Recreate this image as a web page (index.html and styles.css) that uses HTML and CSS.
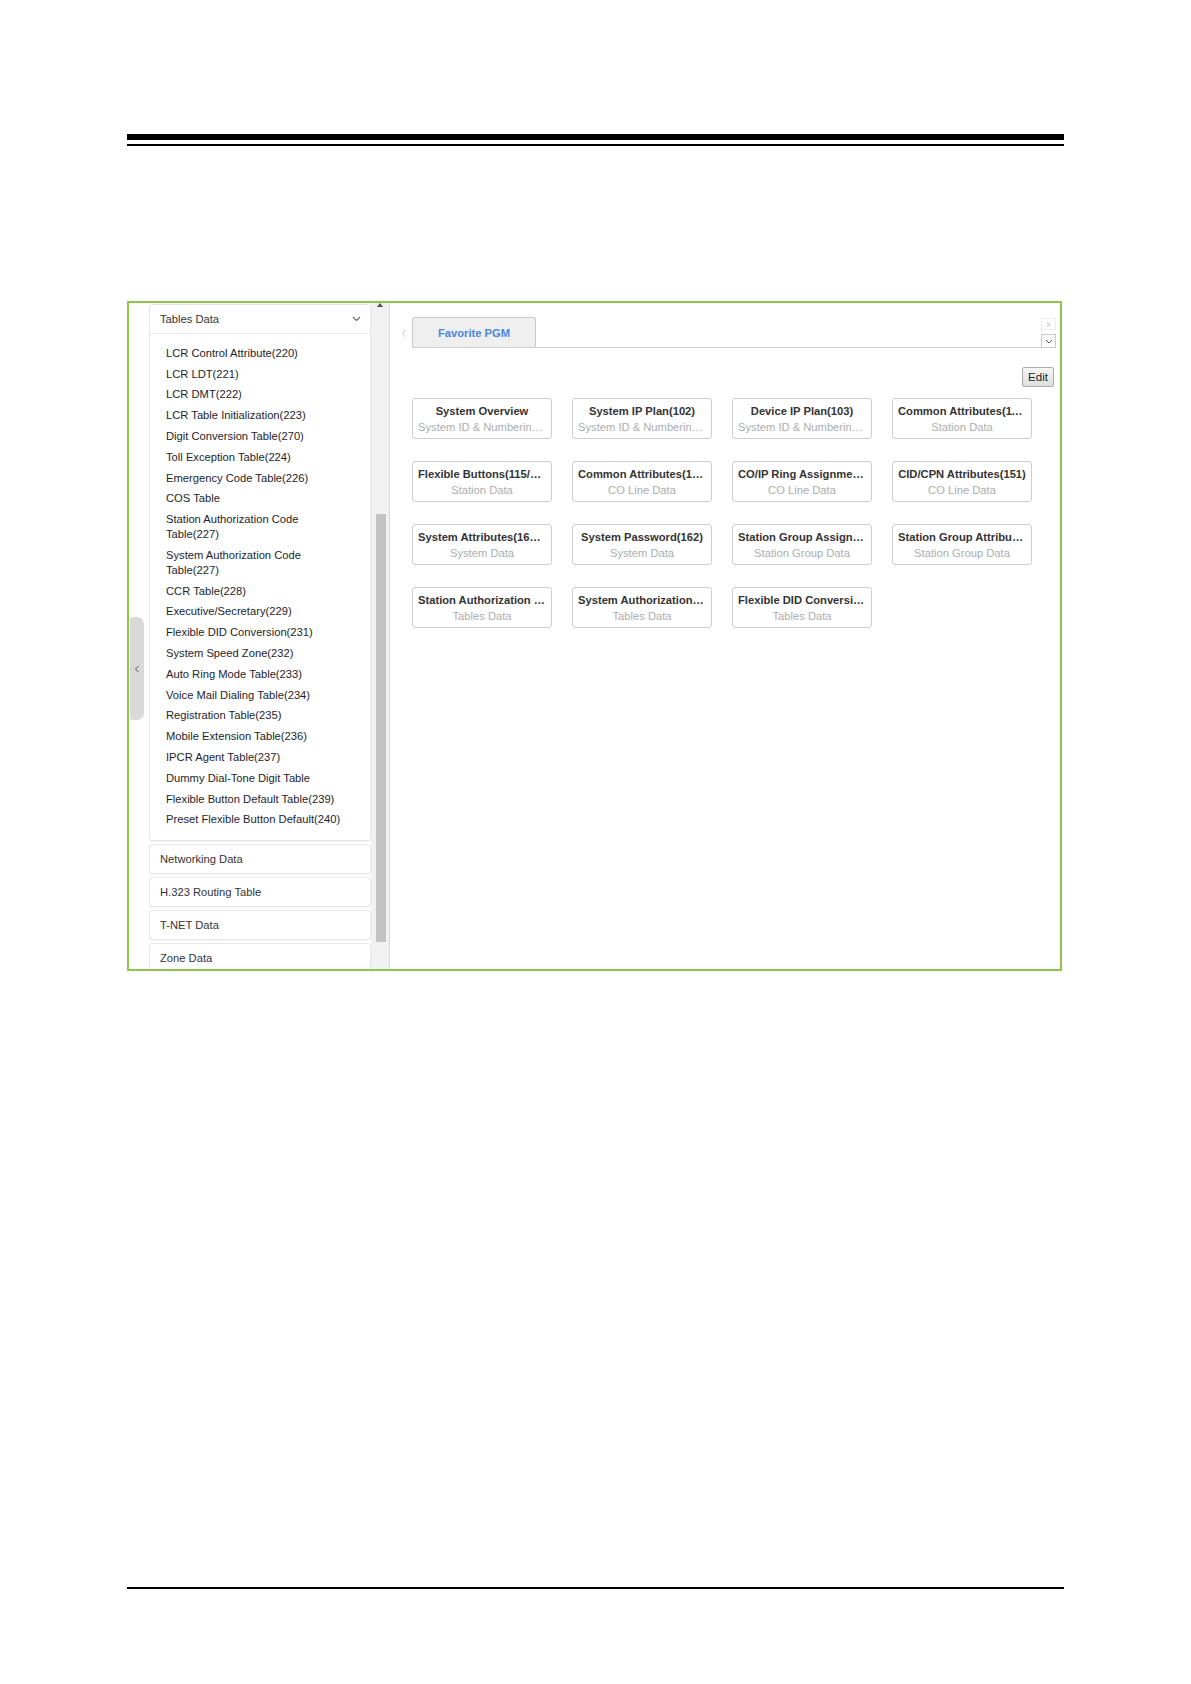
FILE: index.html
```html
<!DOCTYPE html>
<html lang="en">
  <head>
    <meta charset="UTF-8" />
    <meta name="viewport" content="width=device-width, initial-scale=1.0" />
    <title>Favorite PGM</title>
    <link rel="stylesheet" href="styles.css">
  </head>
  <body>
    <div class="page">
      <div class="rule">
        <div class="rule-thick"></div>
        <div class="rule-thin"></div>
      </div>

      <div class="frame">
        <div class="sidebar">
          <div class="gutter">
            <div class="collapse">
              <svg width="6" height="8" viewBox="0 0 6 8"><path d="M4.5 1 L1.5 4 L4.5 7" fill="none" stroke="#555" stroke-width="1"/></svg>
            </div>
          </div>

          <div class="panels">
            <div class="panel open">
              <div class="panel-head">
                <span>Tables Data</span>
                <svg width="9" height="6" viewBox="0 0 9 6"><path d="M1 1 L4.5 4.5 L8 1" fill="none" stroke="#666" stroke-width="1.1"/></svg>
              </div>
              <ul class="menu">
                <li>LCR Control Attribute(220)</li>
                <li>LCR LDT(221)</li>
                <li>LCR DMT(222)</li>
                <li>LCR Table Initialization(223)</li>
                <li>Digit Conversion Table(270)</li>
                <li>Toll Exception Table(224)</li>
                <li>Emergency Code Table(226)</li>
                <li>COS Table</li>
                <li>Station Authorization Code<br>Table(227)</li>
                <li>System Authorization Code<br>Table(227)</li>
                <li>CCR Table(228)</li>
                <li>Executive/Secretary(229)</li>
                <li>Flexible DID Conversion(231)</li>
                <li>System Speed Zone(232)</li>
                <li>Auto Ring Mode Table(233)</li>
                <li>Voice Mail Dialing Table(234)</li>
                <li>Registration Table(235)</li>
                <li>Mobile Extension Table(236)</li>
                <li>IPCR Agent Table(237)</li>
                <li>Dummy Dial-Tone Digit Table</li>
                <li>Flexible Button Default Table(239)</li>
                <li>Preset Flexible Button Default(240)</li>
              </ul>
            </div>
            <div class="panel"><div class="panel-head">Networking Data</div></div>
            <div class="panel"><div class="panel-head">H.323 Routing Table</div></div>
            <div class="panel"><div class="panel-head">T-NET Data</div></div>
            <div class="panel"><div class="panel-head">Zone Data</div></div>
          </div>

          <div class="track">
            <div class="track-arrow"></div>
            <div class="thumb"></div>
          </div>
        </div>

        <div class="main">
          <div class="tabbar">
            <div class="tab-prev">
              <svg width="6" height="9" viewBox="0 0 6 9"><path d="M4.5 1 L1.5 4.5 L4.5 8" fill="none" stroke="#c4c4c4" stroke-width="1"/></svg>
            </div>
            <div class="tabs">
              <div class="tab">Favorite PGM</div>
            </div>
            <div class="tab-tools">
              <div class="tool-close">x</div>
              <div class="tool-menu">
                <svg width="8" height="5" viewBox="0 0 8 5"><path d="M1 1 L4 4 L7 1" fill="none" stroke="#555" stroke-width="1"/></svg>
              </div>
            </div>
          </div>

          <div class="toolbar">
            <button class="edit-btn">Edit</button>
          </div>

          <div class="cards">
            <div class="card"><div class="card-title">System Overview</div><div class="card-sub">System ID &amp; Numbering Plan</div></div>
            <div class="card"><div class="card-title">System IP Plan(102)</div><div class="card-sub">System ID &amp; Numbering Plan</div></div>
            <div class="card"><div class="card-title">Device IP Plan(103)</div><div class="card-sub">System ID &amp; Numbering Plan</div></div>
            <div class="card"><div class="card-title">Common Attributes(110)</div><div class="card-sub">Station Data</div></div>

            <div class="card"><div class="card-title">Flexible Buttons(115/116)</div><div class="card-sub">Station Data</div></div>
            <div class="card"><div class="card-title">Common Attributes(140)</div><div class="card-sub">CO Line Data</div></div>
            <div class="card"><div class="card-title">CO/IP Ring Assignment(144)</div><div class="card-sub">CO Line Data</div></div>
            <div class="card"><div class="card-title">CID/CPN Attributes(151)</div><div class="card-sub">CO Line Data</div></div>

            <div class="card"><div class="card-title">System Attributes(160/161)</div><div class="card-sub">System Data</div></div>
            <div class="card"><div class="card-title">System Password(162)</div><div class="card-sub">System Data</div></div>
            <div class="card"><div class="card-title">Station Group Assignment(190)</div><div class="card-sub">Station Group Data</div></div>
            <div class="card"><div class="card-title">Station Group Attributes(191)</div><div class="card-sub">Station Group Data</div></div>

            <div class="card"><div class="card-title">Station Authorization Code Table(227)</div><div class="card-sub">Tables Data</div></div>
            <div class="card"><div class="card-title">System Authorization Code Table(227)</div><div class="card-sub">Tables Data</div></div>
            <div class="card"><div class="card-title">Flexible DID Conversion(231)</div><div class="card-sub">Tables Data</div></div>
          </div>
        </div>
      </div>

      <div class="footer-rule"></div>
    </div>
  </body>
</html>
```

FILE: styles.css
```css
* {
  margin: 0;
  padding: 0;
  box-sizing: border-box;
}

body {
  font-family: "Liberation Sans", Arial, sans-serif;
  font-size: 11.2px;
  color: #222;
  background: white;
}

.page {
  width: 1191px;
  height: 1684px;
  padding: 134px 0 0 127px;
}

.rule {
  width: 937px;
}

.rule-thick {
  height: 6px;
  background: #000;
}

.rule-thin {
  height: 2px;
  margin-top: 4px;
  background: #000;
}

.frame {
  width: 935px;
  height: 670px;
  margin-top: 155px;
  border: 2px solid #8fc54a;
  display: flex;
  overflow: hidden;
}

/* left menu */

.sidebar {
  width: 261px;
  display: flex;
  border-right: 1px solid #d6d6d6;
  position: relative;
}

.gutter {
  width: 20px;
  position: relative;
}

.collapse {
  position: absolute;
  left: 1px;
  top: 314px;
  width: 14px;
  height: 103px;
  background: #d9d9d9;
  border-radius: 3px 7px 7px 3px;
  display: flex;
  align-items: center;
  justify-content: center;
}

.panels {
  width: 222px;
  padding-top: 1px;
  overflow: hidden;
}

.panel {
  background: white;
  border: 1px solid #e6e6e6;
  border-radius: 3px;
  box-shadow: 0 1px 1px rgba(0, 0, 0, 0.04);
  margin-bottom: 3px;
}

.panel-head {
  height: 28px;
  padding: 0 10px;
  display: flex;
  align-items: center;
  justify-content: space-between;
  color: #333;
}

.panel.open .panel-head {
  height: 29px;
  border-bottom: 1px solid #ececec;
  padding-right: 9px;
}

.menu {
  list-style: none;
  padding: 9px 0 10px 16px;
}

.menu li {
  line-height: 15px;
  padding: 2.9px 4px 2.9px 0;
  color: #1d1d2b;
  white-space: nowrap;
}

.track {
  width: 18px;
  background: #f1f1f1;
  position: relative;
}

.track-arrow {
  position: absolute;
  top: 0;
  left: 6px;
  width: 0;
  height: 0;
  border-left: 3px solid transparent;
  border-right: 3px solid transparent;
  border-bottom: 4px solid #505050;
}

.thumb {
  position: absolute;
  top: 211px;
  left: 5px;
  width: 10px;
  height: 428px;
  background: #c3c3c3;
}

/* main area */

.main {
  flex: 1;
  padding: 15px 4px 0 0;
}

.tabbar {
  display: flex;
  height: 30px;
}

.tab-prev {
  width: 22px;
  display: flex;
  align-items: center;
  justify-content: center;
  padding-left: 5px;
}

.tabs {
  flex: 1;
  border-bottom: 1px solid #cfcfcf;
  display: flex;
  align-items: flex-end;
}

.tab {
  width: 124px;
  height: 30px;
  background: #efefef;
  border: 1px solid #cacaca;
  border-bottom: none;
  border-radius: 3px 3px 0 0;
  display: flex;
  align-items: center;
  justify-content: center;
  color: #4a86e0;
  font-weight: bold;
}

.tab-tools {
  width: 15px;
  display: flex;
  flex-direction: column;
  justify-content: space-between;
}

.tool-close {
  height: 12px;
  border: 1px solid #ececec;
  color: #c8c8c8;
  font-size: 9px;
  line-height: 10px;
  text-align: center;
}

.tool-menu {
  height: 14px;
  border: 1px solid #c8c8c8;
  display: flex;
  align-items: center;
  justify-content: center;
}

.toolbar {
  display: flex;
  justify-content: flex-end;
  margin-top: 19px;
  padding-right: 2px;
}

.edit-btn {
  width: 32px;
  height: 20px;
  font-family: "Liberation Sans", Arial, sans-serif;
  font-size: 11.5px;
  color: #222;
  background: linear-gradient(#f6f6f6, #dedede);
  border: 1px solid #ababab;
  border-radius: 2px;
}

.cards {
  display: grid;
  grid-template-columns: repeat(4, 140px);
  grid-auto-rows: 41px;
  column-gap: 20px;
  row-gap: 22px;
  margin-top: 11px;
  padding-left: 22px;
}

.card {
  border: 1px solid #cdcdcd;
  border-radius: 3px;
  padding: 4px 5px 0;
  text-align: center;
  line-height: 16px;
}

.card-title,
.card-sub {
  white-space: nowrap;
  overflow: hidden;
  text-overflow: ellipsis;
}

.card-title {
  font-weight: bold;
  color: #333;
}

.card-sub {
  color: #acacac;
}

.footer-rule {
  width: 937px;
  height: 2px;
  margin-top: 616px;
  background: #000;
}
```
